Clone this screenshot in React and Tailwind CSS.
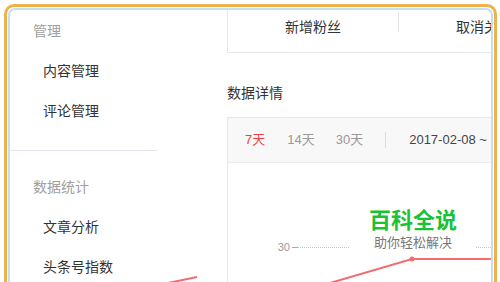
import React from "react";

const font = { fontFamily: '"Liberation Sans", "Noto Sans CJK SC", sans-serif' };

function SideTitle({ children }) {
  return <div className="flex h-[40px] items-center pl-[23px] text-[14px] text-[#a0a0a0]">{children}</div>;
}

function SideItem({ children }) {
  return <div className="flex h-[40px] items-center pl-[33px] text-[14px] text-[#333]">{children}</div>;
}

export default function App() {
  return (
    <div className="relative h-[282px] w-[500px] overflow-hidden bg-white" style={font}>
      <div className="ml-[4px] mt-[4px] h-[300px] w-[493px] rounded-t-[10px] border-[3px] border-b-0 border-[#efb24b] p-[1px] pb-0">
        <div className="flex h-full overflow-hidden rounded-t-[7px] border-2 border-b-0 border-[#c3def7]">
          <div className="w-[217px] shrink-0 pt-px">
            <SideTitle>管理</SideTitle>
            <SideItem>内容管理</SideItem>
            <SideItem>评论管理</SideItem>
            <div className="mt-[19px] h-px w-[147px] bg-[#e3e6ec]" />
            <div className="mt-[16px]">
              <SideTitle>数据统计</SideTitle>
              <SideItem>文章分析</SideItem>
              <SideItem>头条号指数</SideItem>
            </div>
          </div>
          <div className="relative min-w-0 flex-1">
            <div className="flex h-[43px] border-b border-l border-[#e8e8e8]">
              <div className="w-[170px] shrink-0 pt-[7px] text-center text-[14px] leading-[20px] text-[#333]">新增粉丝</div>
              <div className="mt-[2px] h-[20px] w-px shrink-0 bg-[#e6e6e6]" />
              <div className="w-[170px] shrink-0 pt-[7px] text-center text-[14px] leading-[20px] text-[#333]">取消关注</div>
            </div>
            <div className="pt-[30px] text-[14px] leading-[20px] text-[#333]">数据详情</div>
            <div className="mt-[14px] h-[200px] border-l border-t border-[#e8e8e8]">
              <div className="flex h-[45px] items-center border-b border-[#ececec] bg-[#f8f8f8] pl-[17px] text-[13px] text-[#999]">
                <span className="text-[#f04142]">7天</span>
                <span className="ml-[22px]">14天</span>
                <span className="ml-[21px]">30天</span>
                <div className="ml-[22px] h-[16px] w-px bg-[#dedede]" />
                <span className="ml-[23px] text-[#444]">2017-02-08 ~</span>
              </div>
              <div className="mt-[77px] flex h-[14px] items-center">
                <div className="w-[62px] text-right text-[11px] leading-[14px] text-[#999]">30</div>
                <div className="ml-[2px] h-px w-[6px] bg-[#aaa]" />
                <div className="flex-1 border-t border-dotted border-[#c8c8c8]" />
              </div>
            </div>
            <div className="absolute left-[123px] top-[196px] flex h-[48px] w-[126px] flex-col items-center bg-white pt-[2px]">
              <div className="text-[22px] font-bold leading-[26px] text-[#19c236]">百科全说</div>
              <div className="mt-[1px] text-[13px] leading-[16px] text-[#777]">助你轻松解决</div>
            </div>
          </div>
        </div>
      </div>
      <svg className="pointer-events-none absolute left-0 top-0" width="500" height="282" viewBox="0 0 500 282">
        <line x1="168" y1="283" x2="197" y2="277" stroke="#f56c6c" strokeWidth="2" />
        <polyline points="330,283 412,259 491,259" fill="none" stroke="#f56c6c" strokeWidth="2" />
        <circle cx="412" cy="259" r="2.5" fill="#f56c6c" />
      </svg>
    </div>
  );
}
